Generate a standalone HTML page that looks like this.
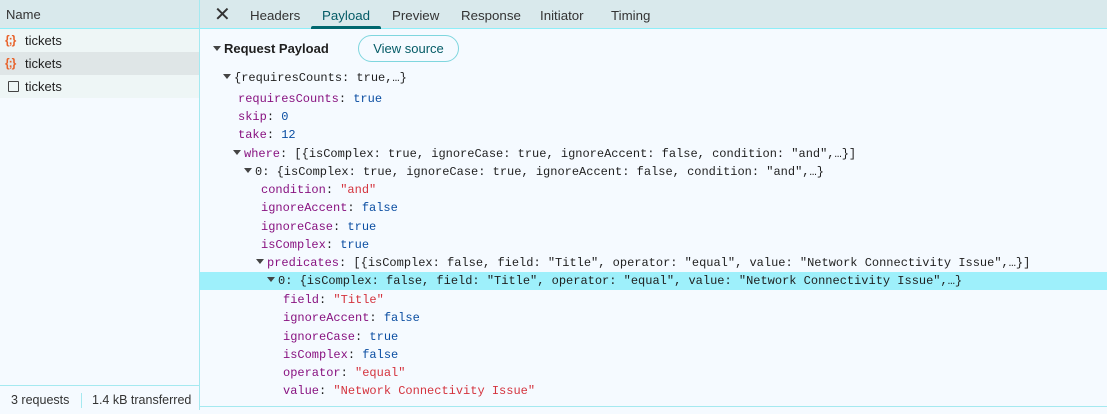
<!DOCTYPE html><html><head><style>
*{margin:0;padding:0;box-sizing:border-box}
body{width:1107px;height:410px;overflow:hidden;background:#f5faff;font-family:"Liberation Sans",sans-serif;position:relative}
.hd{position:absolute;top:0;height:29px;background:#d9e9ec;border-bottom:1px solid #8eeef8}
.l{position:absolute;left:0;top:0;width:200px;height:410px;border-right:1px solid #a5e9f0;background:#f5faff}
.row{position:absolute;left:0;width:199px;height:23px;font-size:13px;color:#1f1f1f;line-height:23px;padding-left:25px}
.ic{position:absolute;left:5px;top:0;font-size:12px;color:#e8622a;font-weight:bold;letter-spacing:-1px}
.foot{position:absolute;left:0;top:385px;width:199px;height:25px;border-top:1px solid #a5e9f0;font-size:12.5px;color:#333;line-height:28px}
.tab{position:absolute;top:8px;font-size:13.3px;color:#333}
.m{position:absolute;font-family:"Liberation Mono",monospace;font-size:12px;white-space:pre;color:#1f1f1f;line-height:18px;margin-top:1px}
.k{color:#881280}.s{color:#d4333d}.b{color:#0b4ea2}
.tri{display:inline-block;width:0;height:0;border-left:4px solid transparent;border-right:4px solid transparent;border-top:5px solid #444;margin-right:3px;vertical-align:2px}
</style></head><body>
<div class="l">
<div class="hd" style="left:0;width:199px;font-size:13px;color:#333;line-height:29px;padding-left:6px">Name</div>
<div class="row" style="top:29px;background:#eef6f6"><span class="ic">{;}</span>tickets</div>
<div class="row" style="top:52px;background:#dfe6e7"><span class="ic">{;}</span>tickets</div>
<div class="row" style="top:75px;background:#eef6f6"><span style="position:absolute;left:8px;top:6px;width:11px;height:11px;border:1.5px solid #444;border-radius:1px"></span>tickets</div>
<div class="foot"><span style="position:absolute;left:11px">3 requests</span><span style="position:absolute;left:81px;top:7px;height:15px;border-left:1px solid #a5e9f0"></span><span style="position:absolute;left:92px">1.4 kB transferred</span></div>
</div>
<div class="hd" style="left:200px;width:907px"></div>
<div style="position:absolute;left:214px;top:2px;font-size:20px;color:#333">✕</div>
<div class="tab" style="left:250px">Headers</div>
<div class="tab" style="left:322px;color:#045b66">Payload</div>
<div style="position:absolute;left:311px;top:26px;width:70px;height:3px;background:#00676e;border-radius:2px 2px 0 0"></div>
<div class="tab" style="left:392px">Preview</div>
<div class="tab" style="left:461px">Response</div>
<div class="tab" style="left:540px">Initiator</div>
<div class="tab" style="left:611px">Timing</div>
<div style="position:absolute;left:213px;top:41px;font-size:13px;font-weight:bold;color:#1f1f1f"><span class="tri"></span>Request Payload</div>
<div style="position:absolute;left:358px;top:35px;width:101px;height:27px;border:1px solid #7fd6de;border-radius:14px;font-size:13px;color:#045b66;text-align:center;line-height:25px">View source</div>
<div style="position:absolute;left:200px;top:272px;width:907px;height:18px;background:#9ef0fb"></div>
<div class="m" style="left:223px;top:68px"><span class="tri"></span>{requiresCounts: true,…}</div>
<div class="m" style="left:238px;top:89px"><span class="k">requiresCounts</span>: <span class="b">true</span></div>
<div class="m" style="left:238px;top:107px"><span class="k">skip</span>: <span class="b">0</span></div>
<div class="m" style="left:238px;top:125px"><span class="k">take</span>: <span class="b">12</span></div>
<div class="m" style="left:233px;top:144px"><span class="tri"></span><span class="k">where</span>: [{isComplex: true, ignoreCase: true, ignoreAccent: false, condition: "and",…}]</div>
<div class="m" style="left:244px;top:162px"><span class="tri"></span>0: {isComplex: true, ignoreCase: true, ignoreAccent: false, condition: "and",…}</div>
<div class="m" style="left:261px;top:180px"><span class="k">condition</span>: <span class="s">"and"</span></div>
<div class="m" style="left:261px;top:198px"><span class="k">ignoreAccent</span>: <span class="b">false</span></div>
<div class="m" style="left:261px;top:217px"><span class="k">ignoreCase</span>: <span class="b">true</span></div>
<div class="m" style="left:261px;top:235px"><span class="k">isComplex</span>: <span class="b">true</span></div>
<div class="m" style="left:256px;top:253px"><span class="tri"></span><span class="k">predicates</span>: [{isComplex: false, field: "Title", operator: "equal", value: "Network Connectivity Issue",…}]</div>
<div class="m" style="left:267px;top:271px"><span class="tri"></span>0: {isComplex: false, field: "Title", operator: "equal", value: "Network Connectivity Issue",…}</div>
<div class="m" style="left:283px;top:290px"><span class="k">field</span>: <span class="s">"Title"</span></div>
<div class="m" style="left:283px;top:308px"><span class="k">ignoreAccent</span>: <span class="b">false</span></div>
<div class="m" style="left:283px;top:327px"><span class="k">ignoreCase</span>: <span class="b">true</span></div>
<div class="m" style="left:283px;top:345px"><span class="k">isComplex</span>: <span class="b">false</span></div>
<div class="m" style="left:283px;top:363px"><span class="k">operator</span>: <span class="s">"equal"</span></div>
<div class="m" style="left:283px;top:381px"><span class="k">value</span>: <span class="s">"Network Connectivity Issue"</span></div>
<div style="position:absolute;left:200px;top:406px;width:907px;border-top:1px solid #a5e9f0"></div>
</body></html>
